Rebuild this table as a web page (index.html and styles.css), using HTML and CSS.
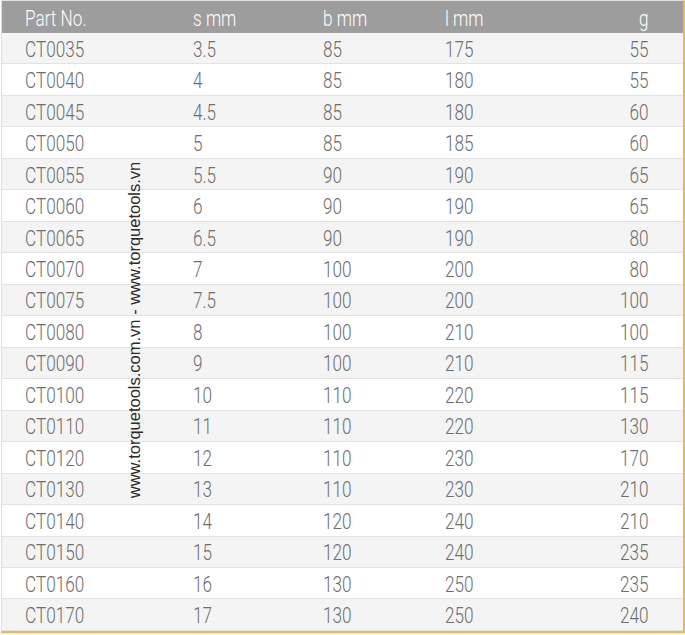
FILE: index.html
```html
<!DOCTYPE html>
<html>
<head>
<meta charset="utf-8">
<link rel="stylesheet" href="styles.css">
</head>
<body>
<div class="frame">
  <div class="table">
    <div class="row head"><span class="c">Part No.</span><span class="c">s mm</span><span class="c">b mm</span><span class="c">l mm</span><span class="c r">g</span></div>
    <div class="row"><span class="c">CT0035</span><span class="c">3.5</span><span class="c">85</span><span class="c">175</span><span class="c r">55</span></div>
    <div class="row"><span class="c">CT0040</span><span class="c">4</span><span class="c">85</span><span class="c">180</span><span class="c r">55</span></div>
    <div class="row"><span class="c">CT0045</span><span class="c">4.5</span><span class="c">85</span><span class="c">180</span><span class="c r">60</span></div>
    <div class="row"><span class="c">CT0050</span><span class="c">5</span><span class="c">85</span><span class="c">185</span><span class="c r">60</span></div>
    <div class="row"><span class="c">CT0055</span><span class="c">5.5</span><span class="c">90</span><span class="c">190</span><span class="c r">65</span></div>
    <div class="row"><span class="c">CT0060</span><span class="c">6</span><span class="c">90</span><span class="c">190</span><span class="c r">65</span></div>
    <div class="row"><span class="c">CT0065</span><span class="c">6.5</span><span class="c">90</span><span class="c">190</span><span class="c r">80</span></div>
    <div class="row"><span class="c">CT0070</span><span class="c">7</span><span class="c">100</span><span class="c">200</span><span class="c r">80</span></div>
    <div class="row"><span class="c">CT0075</span><span class="c">7.5</span><span class="c">100</span><span class="c">200</span><span class="c r">100</span></div>
    <div class="row"><span class="c">CT0080</span><span class="c">8</span><span class="c">100</span><span class="c">210</span><span class="c r">100</span></div>
    <div class="row"><span class="c">CT0090</span><span class="c">9</span><span class="c">100</span><span class="c">210</span><span class="c r">115</span></div>
    <div class="row"><span class="c">CT0100</span><span class="c">10</span><span class="c">110</span><span class="c">220</span><span class="c r">115</span></div>
    <div class="row"><span class="c">CT0110</span><span class="c">11</span><span class="c">110</span><span class="c">220</span><span class="c r">130</span></div>
    <div class="row"><span class="c">CT0120</span><span class="c">12</span><span class="c">110</span><span class="c">230</span><span class="c r">170</span></div>
    <div class="row"><span class="c">CT0130</span><span class="c">13</span><span class="c">110</span><span class="c">230</span><span class="c r">210</span></div>
    <div class="row"><span class="c">CT0140</span><span class="c">14</span><span class="c">120</span><span class="c">240</span><span class="c r">210</span></div>
    <div class="row"><span class="c">CT0150</span><span class="c">15</span><span class="c">120</span><span class="c">240</span><span class="c r">235</span></div>
    <div class="row"><span class="c">CT0160</span><span class="c">16</span><span class="c">130</span><span class="c">250</span><span class="c r">235</span></div>
    <div class="row"><span class="c">CT0170</span><span class="c">17</span><span class="c">130</span><span class="c">250</span><span class="c r">240</span></div>
  </div>
  <div class="watermark">www.torquetools.com.vn - www.torquetools.vn</div>
</div>
</body>
</html>
```
FILE: styles.css
```css
html, body {
  margin: 0;
  padding: 0;
  background: #ffffff;
}
.frame {
  position: relative;
  width: 681px;
  margin-left: 1px;
  border-top: 1px solid #e2e2e2;
  border-left: 1px solid #f6dcb4;
  border-right: 2px solid #f5b54a;
  border-bottom: 2px solid #f5b54a;
}
.table {
  font-family: Roboto, "Liberation Sans", sans-serif;
  font-size: 22px;
  font-weight: 300;
  color: #6e6e6e;
}
.row {
  display: grid;
  grid-template-columns: 168px 130px 122px 1fr 1fr;
  padding: 0 35px 0 23px;
  height: 31.47px;
  box-sizing: border-box;
  border-bottom: 1px solid #e3e3e3;
  align-items: center;
}
.row:nth-child(even) {
  background: #f4f4f4;
}
.row:nth-child(odd) {
  background: #ffffff;
}
.row.head {
  height: 32px;
  background: #9d9d9d;
  color: #ffffff;
  border-bottom: none;
}
.c {
  display: block;
  white-space: nowrap;
  line-height: 22px;
  padding-top: 3px;
  transform: scaleX(0.78);
  transform-origin: left center;
}
.c.r {
  text-align: right;
  transform-origin: right center;
}
.watermark {
  position: absolute;
  left: 132px;
  top: 329px;
  transform: translate(-50%, -50%) rotate(-90deg);
  font-family: "Liberation Sans", Arial, sans-serif;
  font-size: 16.5px;
  color: #2a2a2a;
  white-space: nowrap;
}
```
